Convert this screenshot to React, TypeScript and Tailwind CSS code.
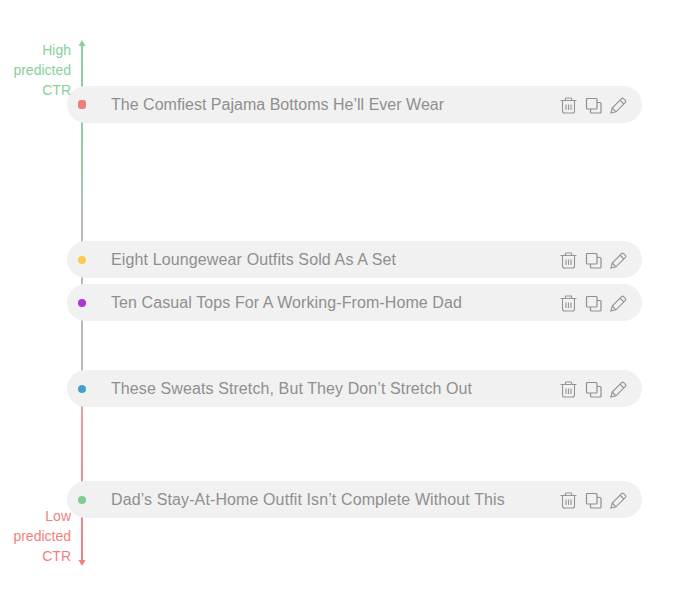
import React from 'react';

const headlines = [
  { text: 'The Comfiest Pajama Bottoms He’ll Ever Wear', dot: 'bg-[#ec7f7f]', dotShape: 'w-2 h-[9px] rounded-[3px]', margin: 'mt-[86px]', tracking: 'tracking-[0.02px]' },
  { text: 'Eight Loungewear Outfits Sold As A Set', dot: 'bg-[#fbcb4f]', dotShape: 'w-2 h-2 rounded-full', margin: 'mt-[118px]', tracking: 'tracking-[0.13px]' },
  { text: 'Ten Casual Tops For A Working-From-Home Dad', dot: 'bg-[#ad36d6]', dotShape: 'w-2 h-2 rounded-full', margin: 'mt-[6px]', tracking: 'tracking-[0.09px]' },
  { text: 'These Sweats Stretch, But They Don’t Stretch Out', dot: 'bg-[#45a0cc]', dotShape: 'w-2 h-2 rounded-full', margin: 'mt-[49px]', tracking: 'tracking-[0.1px]' },
  { text: 'Dad’s Stay-At-Home Outfit Isn’t Complete Without This', dot: 'bg-[#7fcb94]', dotShape: 'w-2 h-2 rounded-full', margin: 'mt-[74px]', tracking: 'tracking-[0.11px]' },
];

const TrashIcon = () => (
  <svg width="17" height="17" viewBox="0 0 17 17" fill="none" stroke="#969696" strokeWidth="1.1">
    <path d="M.5 3.5h16M5 3.5l.8-2.5h5.4l.8 2.5M2.5 3.5v10.5a2 2 0 0 0 2 2h8a2 2 0 0 0 2-2V3.5" />
    <path d="M6 7.5v5.5M8.5 7.5v5.5M11 7.5v5.5" />
  </svg>
);

const CopyIcon = () => (
  <svg width="17" height="17" viewBox="0 0 17 17" fill="none" stroke="#8f8f8f" strokeWidth="1.2">
    <rect x="1.5" y="1.5" width="10.5" height="10.5" rx="1" />
    <path d="M12 5.5h3a1 1 0 0 1 1 1V15a1 1 0 0 1-1 1H6.5a1 1 0 0 1-1-1v-3" />
  </svg>
);

const PencilIcon = () => (
  <svg width="17" height="17" viewBox="0 0 17 17" fill="none" stroke="#969696" strokeWidth="1.2">
    <path d="M1 16l1.2-5L11.6 1.6a1.4 1.4 0 0 1 2 0l1.8 1.8a1.4 1.4 0 0 1 0 2L6 14.8z" />
    <path d="M2.2 11L6 14.8M10 3.2l3.8 3.8" />
  </svg>
);

const Row = ({ text, dot, dotShape, margin, tracking }: (typeof headlines)[number]) => (
  <div className={`relative z-10 flex items-center h-[37px] ml-[67px] w-[575px] pl-[11px] pr-[15px] rounded-full bg-[#f1f1f1] ${margin}`}>
    <span className="w-2 flex justify-center">
      <span className={`block ${dot} ${dotShape}`} />
    </span>
    <span className={`ml-[25px] flex-1 text-[16px] text-[#8f8f8f] whitespace-nowrap ${tracking}`}>{text}</span>
    <div className="flex items-center gap-2 mt-[2px]">
      <TrashIcon />
      <CopyIcon />
      <PencilIcon />
    </div>
  </div>
);

export default function App() {
  return (
    <div className="relative w-[688px] h-[599px] overflow-hidden bg-white font-['Liberation_Sans',sans-serif]">
      {/* axis behind the rows */}
      <div className="absolute left-[81px] top-[42px] w-[2px] h-[522px] bg-[linear-gradient(to_bottom,#86d19c_0%,#8fd0a4_20%,#b9b9b9_34%,#b9b9b9_62%,#ef9a9a_72%,#ef7f7f_100%)]" />
      <svg className="absolute left-[78px] top-[40px]" width="8" height="6" viewBox="0 0 8 6">
        <path d="M4 0l3.5 6h-7z" fill="#86d19c" />
      </svg>
      <svg className="absolute left-[78px] top-[560px]" width="8" height="6" viewBox="0 0 8 6">
        <path d="M4 6L.5 0h7z" fill="#ef7f7f" />
      </svg>

      <div className="absolute z-20 right-[617px] top-[40px] text-right text-[14px] leading-[20px] text-[#86d19c]">
        High<br />predicted<br />CTR
      </div>
      <div className="absolute z-20 right-[617px] top-[506px] text-right text-[14px] leading-[20px] text-[#ef7f7f]">
        Low<br />predicted<br />CTR
      </div>

      <div className="flex flex-col">
        {headlines.map((h) => (
          <Row key={h.text} {...h} />
        ))}
      </div>
    </div>
  );
}
